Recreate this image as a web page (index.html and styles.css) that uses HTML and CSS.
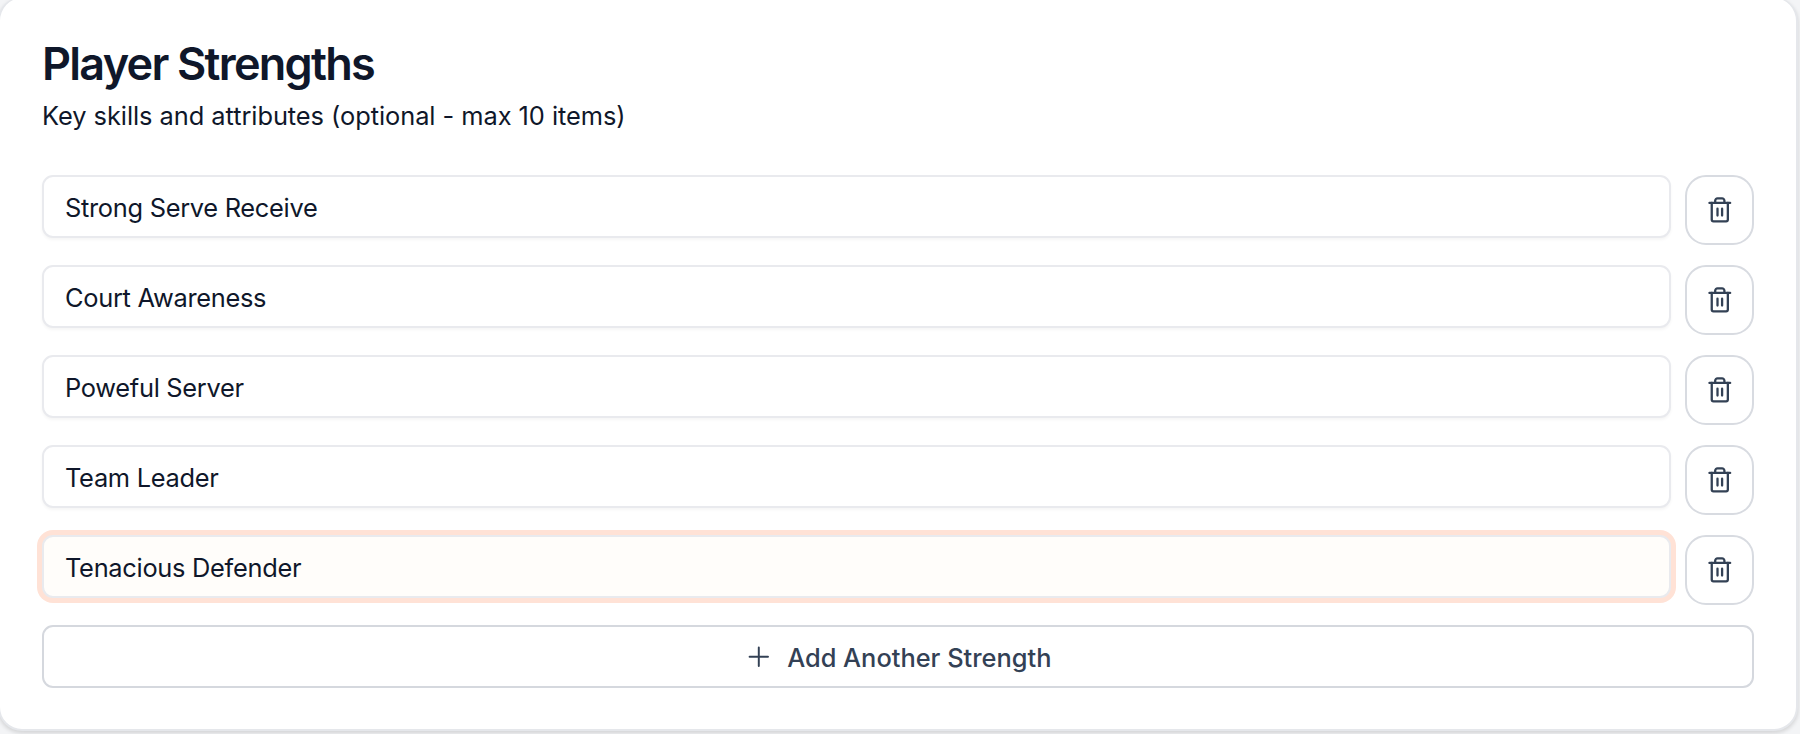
FILE: index.html
```html
<!DOCTYPE html>
<html lang="en">
<head>
    <meta charset="UTF-8">
    <meta name="viewport" content="width=device-width, initial-scale=1.0">
    <title>Player Strengths</title>
    <link rel="stylesheet" href="styles.css">
</head>
<body>
    <!-- Trash icon shared by all rows -->
    <svg class="icon-defs" aria-hidden="true">
        <symbol id="icon-trash" viewBox="0 0 24 24">
            <path d="M3 6h18"/>
            <path d="M19 6v14.5c0 1-.5 1.5-1.5 1.5H6.500c-1 0-1.500-.5-1.500-1.500V6"/>
            <path d="M8 6V4c0-1 1-2 2-2h4c1 0 2 1 2 2v2"/>
            <path d="M10 11v6"/>
            <path d="M14 11v6"/>
        </symbol>
    </svg>

    <section class="card">
        <h2 class="card-title">Player Strengths</h2>
        <p class="card-description">Key skills and attributes (optional - max 10 items)</p>

        <div class="strengths">
            <div class="strength-row">
                <input type="text" class="strength-input" value="Strong Serve Receive">
                <button type="button" class="remove-btn" aria-label="Remove"><svg class="icon"><use href="#icon-trash"/></svg></button>
            </div>
            <div class="strength-row">
                <input type="text" class="strength-input" value="Court Awareness">
                <button type="button" class="remove-btn" aria-label="Remove"><svg class="icon"><use href="#icon-trash"/></svg></button>
            </div>
            <div class="strength-row">
                <input type="text" class="strength-input" value="Poweful Server">
                <button type="button" class="remove-btn" aria-label="Remove"><svg class="icon"><use href="#icon-trash"/></svg></button>
            </div>
            <div class="strength-row">
                <input type="text" class="strength-input" value="Team Leader">
                <button type="button" class="remove-btn" aria-label="Remove"><svg class="icon"><use href="#icon-trash"/></svg></button>
            </div>
            <div class="strength-row">
                <input type="text" class="strength-input active" value="Tenacious Defender">
                <button type="button" class="remove-btn" aria-label="Remove"><svg class="icon"><use href="#icon-trash"/></svg></button>
            </div>

            <button type="button" class="add-btn">
                <svg class="icon icon-plus" viewBox="0 0 24 24"><path d="M4 12h16M12 4v16"/></svg>
                <span>Add Another Strength</span>
            </button>
        </div>
    </section>
</body>
</html>
```
FILE: styles.css
```css
* {
    margin: 0;
    padding: 0;
    box-sizing: border-box;
}

body {
    height: 734px;
    overflow: hidden;
    background-color: #f3f4f6;
    color: #0f172a;
    font-family: Inter, "Liberation Sans", sans-serif;
}

.icon-defs {
    display: none;
}

/* Card */
.card {
    width: 1800px;
    height: 734px;
    margin: -3px 0 0 -2px;
    padding: 41px 42px 0;
    background-color: white;
    border: 2px solid #e5e7eb;
    border-top-width: 1px;
    border-radius: 24px;
    box-shadow: 0 2px 4px rgba(0, 0, 0, 0.14);
}

.card-title {
    font-size: 45px;
    font-weight: 600;
    line-height: 50px;
    letter-spacing: -1.75px;
}

.card-description {
    margin-top: 9px;
    font-size: 25.4px;
    line-height: 36px;
    letter-spacing: -0.05px;
}

/* Strength rows */
.strengths {
    display: flex;
    flex-direction: column;
    gap: 20px;
    margin-top: 41px;
}

.strength-row {
    display: flex;
    align-items: flex-start;
    gap: 14px;
    height: 70px;
}

.strength-input {
    flex: 1;
    height: 63px;
    padding: 1px 21px 0;
    background-color: white;
    border: 2px solid #e9eaee;
    border-radius: 11px;
    box-shadow: 0 2px 3px rgba(0, 0, 0, 0.04);
    color: #0f172a;
    font-family: inherit;
    font-size: 25.4px;
    letter-spacing: -0.29px;
    outline: none;
}

.strength-input.active {
    background-color: #fffdfa;
    box-shadow: 0 0 0 5px #ffe2d6;
}

.remove-btn {
    display: flex;
    align-items: center;
    justify-content: center;
    width: 69px;
    height: 70px;
    background-color: white;
    border: 2px solid #d8dbe1;
    border-radius: 21px;
    color: #334155;
    cursor: pointer;
}

.icon {
    width: 27.6px;
    height: 27.6px;
    fill: none;
    stroke: currentColor;
    stroke-width: 2;
    stroke-linecap: round;
    stroke-linejoin: round;
}

/* Add button */
.add-btn {
    display: flex;
    align-items: center;
    justify-content: center;
    gap: 15px;
    height: 63px;
    padding-top: 1px;
    background-color: white;
    border: 2px solid #d5d8de;
    border-radius: 11px;
    color: #334155;
    font-family: inherit;
    font-size: 25.4px;
    font-weight: 500;
    cursor: pointer;
}

.icon-plus {
    stroke-width: 1.7;
}
```
